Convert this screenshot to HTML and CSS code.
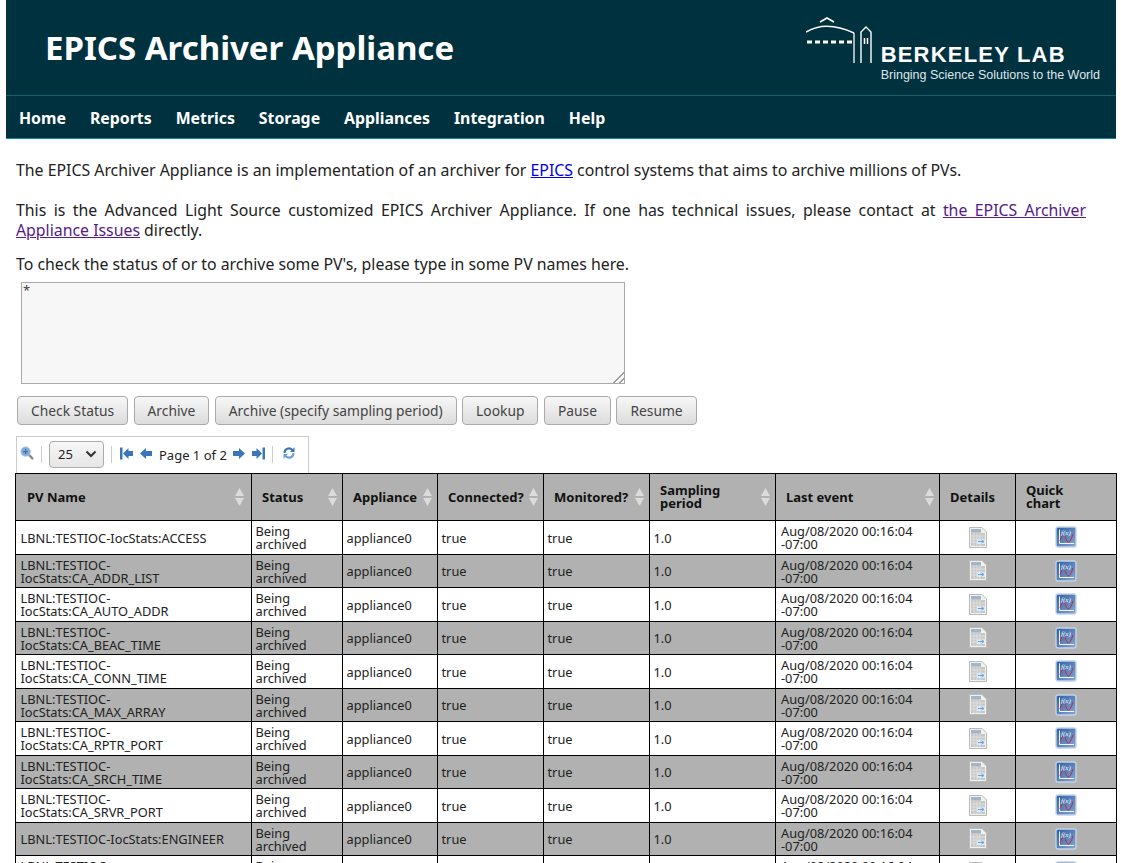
FILE: index.html
```html
<!DOCTYPE html>
<html lang="en">
<head>
    <meta charset="UTF-8">
    <title>EPICS Archiver Appliance</title>
    <link rel="stylesheet" href="styles.css">
</head>
<body>
    <!-- Shared icons -->
    <svg class="icon-defs" width="0" height="0">
        <defs>
            <linearGradient id="chartFill" x1="0" y1="0" x2="1" y2="1">
                <stop offset="0" stop-color="#2c5fa6"/>
                <stop offset="1" stop-color="#86a7d2"/>
            </linearGradient>
            <symbol id="docIcon" viewBox="0 0 20 23">
                <path d="M1.5 1.500H14L18.500 6V21.500H1.500Z" fill="#f1f1ee" stroke="#b9b9b5"/>
                <path d="M3 3H13V7H17V20H3Z" fill="#c6c8c8"/>
                <path d="M3 3H13V6H3Z" fill="#a3b6c9"/>
                <path d="M6 7V20M9 7V20M12 7V20M3 10H17M3 13H17M3 16H17" stroke="#e6e6e4" stroke-width=".7"/>
                <path d="M9 13.500H17V18H9Z" fill="#dce9f6"/>
                <path d="M10 15.500H15M13.500 14L16 15.500L13.500 17" fill="none" stroke="#6da3da"/>
            </symbol>
            <symbol id="chartIcon" viewBox="0 0 22 22">
                <rect x="1" y="1" width="20" height="20" rx="2" fill="url(#chartFill)" stroke="#c5d3e6" stroke-width="1.400"/>
                <path d="M4.500 3.500V17.500H19" fill="none" stroke="#f2f6fb" stroke-width="1"/>
                <path d="M5 15C7 7 9 8 11 13S15 17 18 8" fill="none" stroke="#c4283c" stroke-width="1"/>
                <text class="chart-label" x="6" y="8.500">f(x)</text>
            </symbol>
            <symbol id="sortIcon" viewBox="0 0 9 18">
                <path d="M4.500 0L9 8H0Z M4.500 18L0 10H9Z" fill="#dcdcdc"/>
            </symbol>
            <symbol id="firstIcon" viewBox="0 0 13 13">
                <path d="M0 .5H2.500V12.500H0ZM3 6.500L8.500 1V4H13V9H8.500V12Z" fill="#3a77b8"/>
            </symbol>
            <symbol id="prevIcon" viewBox="0 0 12 13">
                <path d="M0 6.500L6 1V4H12V9H6V12Z" fill="#3a77b8"/>
            </symbol>
            <symbol id="nextIcon" viewBox="0 0 12 13">
                <path d="M12 6.500L6 1V4H0V9H6V12Z" fill="#3a77b8"/>
            </symbol>
            <symbol id="lastIcon" viewBox="0 0 13 13">
                <path d="M13 .5H10.500V12.500H13ZM10 6.500L4.500 1V4H0V9H4.500V12Z" fill="#3a77b8"/>
            </symbol>
        </defs>
    </svg>

    <!-- Header Section -->
    <header class="site-header">
        <div class="banner">
            <div class="app-title">EPICS Archiver Appliance</div>
            <div class="lab-logo">
                <svg class="lab-mark" width="67" height="47" viewBox="0 0 67 47">
                    <path d="M14 5L21 1L28 5" fill="none" stroke="#fff" stroke-width="1.700"/>
                    <path d="M0 15Q20 3 48 16" fill="none" stroke="#fff" stroke-width="1.500"/>
                    <path d="M1 25H46" stroke="#fff" stroke-width="3" stroke-dasharray="5 3"/>
                    <path d="M48 16V46" fill="none" stroke="#fff" stroke-width="1.300"/>
                    <path d="M55 46V15L60 10L65 15V46" fill="none" stroke="#fff" stroke-width="1.400"/>
                    <path d="M58.500 21V27M61.500 21V27" stroke="#fff" stroke-width="1.500"/>
                </svg>
                <div class="lab-text">
                    <div class="lab-name">BERKELEY LAB</div>
                    <div class="lab-tagline">Bringing Science Solutions to the World</div>
                </div>
            </div>
        </div>
        <nav class="main-nav">
            <a href="#">Home</a>
            <a href="#">Reports</a>
            <a href="#">Metrics</a>
            <a href="#">Storage</a>
            <a href="#">Appliances</a>
            <a href="#">Integration</a>
            <a href="#">Help</a>
        </nav>
    </header>

    <!-- Main Section -->
    <main class="content">
        <p class="intro first">The EPICS Archiver Appliance is an implementation of an archiver for <a href="#">EPICS</a> control systems that aims to archive millions of PVs.</p>
        <p class="intro justified">This is the Advanced Light Source customized EPICS Archiver Appliance. If one has technical issues, please contact at <a class="visited" href="#">the EPICS Archiver Appliance Issues</a> directly.</p>
        <p class="intro">To check the status of or to archive some PV's, please type in some PV names here.</p>

        <div class="pv-input-wrap">
            <textarea class="pv-input">*</textarea>
        </div>

        <div class="actions">
            <button>Check Status</button>
            <button>Archive</button>
            <button>Archive (specify sampling period)</button>
            <button>Lookup</button>
            <button>Pause</button>
            <button>Resume</button>
        </div>

        <!-- Pager -->
        <div class="pager">
            <svg class="pager-icon" width="14" height="14" viewBox="0 0 15 15">
                <path d="M9 9L14 14" stroke="#8a8a8a" stroke-width="2.500"/>
                <circle cx="6" cy="6" r="5" fill="#7ea9d8" stroke="#a9c3df"/>
                <path d="M3.500 6H8.500M6 3.500V8.500" stroke="#3d72ad" stroke-width="1.200"/>
            </svg>
            <span class="pager-sep"></span>
            <div class="page-size"><span>25</span>
                <svg width="12" height="8" viewBox="0 0 12 8"><path d="M1.500 1.500L6 6L10.500 1.500" fill="none" stroke="#333" stroke-width="2"/></svg>
            </div>
            <span class="pager-sep"></span>
            <svg class="pager-icon pager-first" width="13" height="13"><use href="#firstIcon"/></svg>
            <svg class="pager-icon" width="12" height="13"><use href="#prevIcon"/></svg>
            <span class="page-label">Page 1 of 2</span>
            <svg class="pager-icon" width="12" height="13"><use href="#nextIcon"/></svg>
            <svg class="pager-icon" width="13" height="13"><use href="#lastIcon"/></svg>
            <span class="pager-sep"></span>
            <svg class="pager-icon pager-refresh" width="14" height="14" viewBox="0 0 14 14">
                <path d="M1.500 7A5.500 5.500 0 0 1 11 3L12.500 1V6H8L9.500 4.500A3.500 3.500 0 0 0 3.500 7Z" fill="#3a77b8"/>
                <path d="M12.500 7A5.500 5.500 0 0 1 3 11L1.500 13V8H6L4.500 9.500A3.500 3.500 0 0 0 10.500 7Z" fill="#6f9fd2"/>
            </svg>
        </div>

        <!-- PV Table -->
        <table class="pv-table">
            <colgroup>
                <col class="col-name"><col class="col-status"><col class="col-appliance"><col class="col-connected"><col class="col-monitored"><col class="col-period"><col class="col-event"><col class="col-details"><col class="col-chart">
            </colgroup>
            <thead>
                <tr>
                    <th><div class="th-inner">PV Name<svg class="sort" width="9" height="18"><use href="#sortIcon"/></svg></div></th>
                    <th><div class="th-inner">Status<svg class="sort" width="9" height="18"><use href="#sortIcon"/></svg></div></th>
                    <th><div class="th-inner">Appliance<svg class="sort" width="9" height="18"><use href="#sortIcon"/></svg></div></th>
                    <th><div class="th-inner">Connected?<svg class="sort" width="9" height="18"><use href="#sortIcon"/></svg></div></th>
                    <th><div class="th-inner">Monitored?<svg class="sort" width="9" height="18"><use href="#sortIcon"/></svg></div></th>
                    <th><div class="th-inner">Sampling<br>period<svg class="sort" width="9" height="18"><use href="#sortIcon"/></svg></div></th>
                    <th><div class="th-inner">Last event<svg class="sort" width="9" height="18"><use href="#sortIcon"/></svg></div></th>
                    <th><div class="th-inner">Details</div></th>
                    <th><div class="th-inner">Quick<br>chart</div></th>
                </tr>
            </thead>
            <tbody>
                <tr>
                    <td>LBNL:TESTIOC-IocStats:ACCESS</td><td>Being archived</td><td>appliance0</td><td>true</td><td>true</td><td>1.0</td><td>Aug/08/2020 00:16:04 -07:00</td>
                    <td class="cell-icon"><svg width="20" height="23"><use href="#docIcon"/></svg></td><td class="cell-icon"><svg width="22" height="22"><use href="#chartIcon"/></svg></td>
                </tr>
                <tr>
                    <td>LBNL:TESTIOC-IocStats:CA_ADDR_LIST</td><td>Being archived</td><td>appliance0</td><td>true</td><td>true</td><td>1.0</td><td>Aug/08/2020 00:16:04 -07:00</td>
                    <td class="cell-icon"><svg width="20" height="23"><use href="#docIcon"/></svg></td><td class="cell-icon"><svg width="22" height="22"><use href="#chartIcon"/></svg></td>
                </tr>
                <tr>
                    <td>LBNL:TESTIOC-IocStats:CA_AUTO_ADDR</td><td>Being archived</td><td>appliance0</td><td>true</td><td>true</td><td>1.0</td><td>Aug/08/2020 00:16:04 -07:00</td>
                    <td class="cell-icon"><svg width="20" height="23"><use href="#docIcon"/></svg></td><td class="cell-icon"><svg width="22" height="22"><use href="#chartIcon"/></svg></td>
                </tr>
                <tr>
                    <td>LBNL:TESTIOC-IocStats:CA_BEAC_TIME</td><td>Being archived</td><td>appliance0</td><td>true</td><td>true</td><td>1.0</td><td>Aug/08/2020 00:16:04 -07:00</td>
                    <td class="cell-icon"><svg width="20" height="23"><use href="#docIcon"/></svg></td><td class="cell-icon"><svg width="22" height="22"><use href="#chartIcon"/></svg></td>
                </tr>
                <tr>
                    <td>LBNL:TESTIOC-IocStats:CA_CONN_TIME</td><td>Being archived</td><td>appliance0</td><td>true</td><td>true</td><td>1.0</td><td>Aug/08/2020 00:16:04 -07:00</td>
                    <td class="cell-icon"><svg width="20" height="23"><use href="#docIcon"/></svg></td><td class="cell-icon"><svg width="22" height="22"><use href="#chartIcon"/></svg></td>
                </tr>
                <tr>
                    <td>LBNL:TESTIOC-IocStats:CA_MAX_ARRAY</td><td>Being archived</td><td>appliance0</td><td>true</td><td>true</td><td>1.0</td><td>Aug/08/2020 00:16:04 -07:00</td>
                    <td class="cell-icon"><svg width="20" height="23"><use href="#docIcon"/></svg></td><td class="cell-icon"><svg width="22" height="22"><use href="#chartIcon"/></svg></td>
                </tr>
                <tr>
                    <td>LBNL:TESTIOC-IocStats:CA_RPTR_PORT</td><td>Being archived</td><td>appliance0</td><td>true</td><td>true</td><td>1.0</td><td>Aug/08/2020 00:16:04 -07:00</td>
                    <td class="cell-icon"><svg width="20" height="23"><use href="#docIcon"/></svg></td><td class="cell-icon"><svg width="22" height="22"><use href="#chartIcon"/></svg></td>
                </tr>
                <tr>
                    <td>LBNL:TESTIOC-IocStats:CA_SRCH_TIME</td><td>Being archived</td><td>appliance0</td><td>true</td><td>true</td><td>1.0</td><td>Aug/08/2020 00:16:04 -07:00</td>
                    <td class="cell-icon"><svg width="20" height="23"><use href="#docIcon"/></svg></td><td class="cell-icon"><svg width="22" height="22"><use href="#chartIcon"/></svg></td>
                </tr>
                <tr>
                    <td>LBNL:TESTIOC-IocStats:CA_SRVR_PORT</td><td>Being archived</td><td>appliance0</td><td>true</td><td>true</td><td>1.0</td><td>Aug/08/2020 00:16:04 -07:00</td>
                    <td class="cell-icon"><svg width="20" height="23"><use href="#docIcon"/></svg></td><td class="cell-icon"><svg width="22" height="22"><use href="#chartIcon"/></svg></td>
                </tr>
                <tr>
                    <td>LBNL:TESTIOC-IocStats:ENGINEER</td><td>Being archived</td><td>appliance0</td><td>true</td><td>true</td><td>1.0</td><td>Aug/08/2020 00:16:04 -07:00</td>
                    <td class="cell-icon"><svg width="20" height="23"><use href="#docIcon"/></svg></td><td class="cell-icon"><svg width="22" height="22"><use href="#chartIcon"/></svg></td>
                </tr>
                <tr>
                    <td>LBNL:TESTIOC-IocStats:EPICS_VERSION</td><td>Being archived</td><td>appliance0</td><td>true</td><td>true</td><td>1.0</td><td>Aug/08/2020 00:16:04 -07:00</td>
                    <td class="cell-icon"><svg width="20" height="23"><use href="#docIcon"/></svg></td><td class="cell-icon"><svg width="22" height="22"><use href="#chartIcon"/></svg></td>
                </tr>
            </tbody>
        </table>
    </main>
</body>
</html>
```

FILE: styles.css
```css
/* General Reset */
* {
    box-sizing: border-box;
}

body {
    margin: 0;
    padding: 0 5px 0 6px;
    font-family: "Noto Sans", sans-serif;
    font-size: 15.85px;
    color: #222;
    background: #fff;
}

.icon-defs {
    position: absolute;
}

.chart-label {
    font-family: "Liberation Serif", serif;
    font-size: 7px;
    font-style: italic;
    fill: #fff;
}

/* Header */
.site-header {
    background: #00313f;
    color: #fff;
    border-bottom: 1px solid #0f8c9c;
}

.banner {
    height: 96px;
    display: flex;
    justify-content: space-between;
    align-items: flex-start;
    border-bottom: 1px solid #15606f;
    padding: 0 16px 0 39px;
}

.app-title {
    font-size: 33px;
    font-weight: 700;
    line-height: 42px;
    margin-top: 27px;
}

.lab-logo {
    display: flex;
    align-items: flex-start;
    margin-top: 17px;
}

.lab-mark {
    margin-right: 8px;
}

.lab-text {
    padding-top: 25px;
}

.lab-name {
    font-family: "Liberation Sans", sans-serif;
    font-size: 22px;
    font-weight: 700;
    line-height: 25px;
    letter-spacing: 1.2px;
}

.lab-tagline {
    font-family: "Liberation Sans", sans-serif;
    font-size: 12.5px;
    line-height: 17px;
    color: #dfe6e8;
}

.main-nav {
    height: 42px;
    display: flex;
    align-items: center;
    gap: 24px;
    padding: 1px 0 0 13px;
}

.main-nav a {
    color: #fff;
    text-decoration: none;
    font-weight: 700;
}

/* Main Section */
.content {
    padding-top: 21px;
}

.intro {
    margin: 0 30px 14px 10px;
    line-height: 20px;
}

.intro.first {
    margin-bottom: 20px;
}

.justified {
    text-align: justify;
}

.intro a {
    color: #0000ee;
}

.intro a.visited {
    color: #551a8b;
}

.pv-input-wrap {
    position: relative;
    width: 604px;
    margin: -6px 0 0 15px;
}

/* Resize grip in the corner of the text box */
.pv-input-wrap::after {
    content: "";
    position: absolute;
    right: 1px;
    bottom: 1px;
    width: 14px;
    height: 14px;
    background: repeating-linear-gradient(135deg, #999 0 1px, #f7f7f7 1px 4px);
    clip-path: polygon(100% 0, 100% 100%, 0 100%);
}

.pv-input {
    display: block;
    width: 604px;
    height: 102px;
    padding: 1px;
    resize: none;
    border: 1px solid #aaa;
    background: #f7f7f7;
    font-family: "Noto Sans", sans-serif;
    font-size: 13px;
    line-height: 13px;
    color: #444;
}

.actions {
    display: flex;
    gap: 5.500px;
    margin: 12px 0 11px 11px;
}

.actions button {
    height: 29px;
    padding: 0 13px;
    border: 1px solid #aaa;
    border-radius: 4px;
    background: linear-gradient(#f7f7f7, #dcdcdc);
    font-family: "Noto Sans", sans-serif;
    font-size: 13.800px;
    color: #444;
}

/* Pager */
.pager {
    width: 293px;
    height: 37px;
    margin-left: 10px;
    display: flex;
    align-items: center;
    gap: 7px;
    padding: 0 0 2px 3px;
    border: 1px solid #ccc;
    border-bottom: none;
    font-size: 13px;
    color: #222;
}

.pager-icon {
    margin-top: -2px;
}

.pager-first {
    margin-left: 1px;
}

.pager-refresh {
    margin-left: 2px;
}

.pager-sep {
    width: 1px;
    height: 17px;
    background: #ccc;
}

.page-size {
    width: 55px;
    height: 27px;
    display: flex;
    align-items: center;
    justify-content: space-between;
    padding: 0 6px 0 8px;
    border: 1px solid #aaa;
    border-radius: 4px;
    background: linear-gradient(#f7f7f7, #e6e6e6);
}

.page-label {
    line-height: 16px;
    padding-top: 2px;
    margin-right: -1px;
}

/* PV Table */
.pv-table {
    width: 1101px;
    margin-left: 9px;
    table-layout: fixed;
    border-collapse: collapse;
    font-size: 12.800px;
    line-height: 13px;
    color: #222;
}

.col-name { width: 236px; }
.col-status { width: 91px; }
.col-appliance { width: 95px; }
.col-connected { width: 106px; }
.col-monitored { width: 106px; }
.col-period { width: 126px; }
.col-event { width: 164px; }
.col-details { width: 76px; }
.col-chart { width: 101px; }

.pv-table th,
.pv-table td {
    border: 1px solid #000;
}

.pv-table th {
    height: 47px;
    padding: 0 5px 0 10px;
    background: #b0b1b0;
    color: #111;
    text-align: left;
    font-size: 13px;
    font-weight: 700;
}

.pv-table th:first-child {
    padding-left: 11px;
}

.th-inner {
    position: relative;
}

.sort {
    position: absolute;
    right: 0;
    top: 50%;
    margin-top: -9px;
}

th:first-child .sort {
    right: 2px;
}

.pv-table td {
    height: 33.500px;
    padding: 2px 3px 0 3.500px;
}

.pv-table td:first-child {
    padding-left: 4.500px;
}

.pv-table td:nth-child(7) {
    padding-left: 5px;
}

.pv-table tbody tr:nth-child(even) td {
    background: #b0b1b0;
}

.pv-table td.cell-icon {
    padding: 0;
    text-align: center;
}

.cell-icon svg {
    display: block;
    margin: 0 auto;
}
```
